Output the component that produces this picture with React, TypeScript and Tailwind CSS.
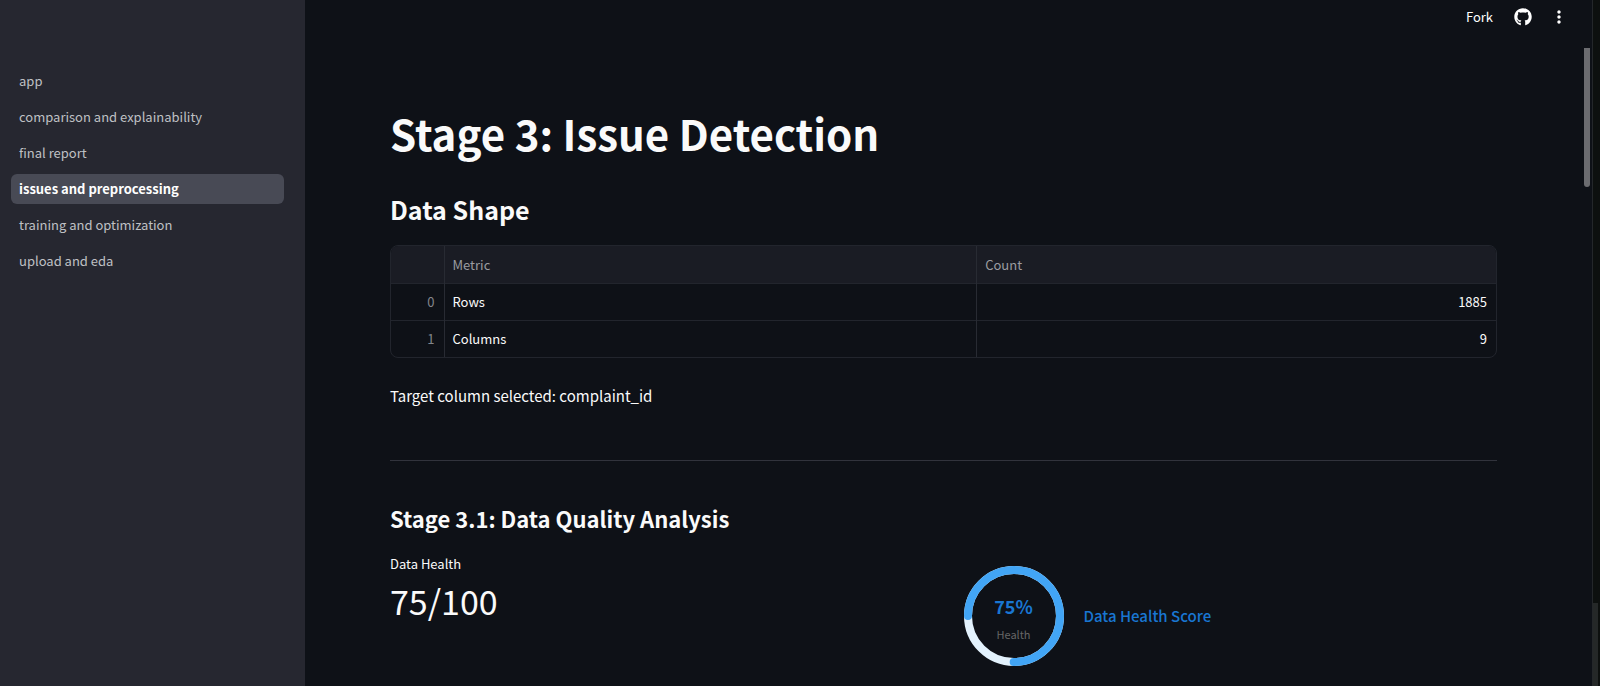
import { FaGithub } from 'react-icons/fa';
import { MdMoreVert } from 'react-icons/md';

const PAGES = [
  'app',
  'comparison and explainability',
  'final report',
  'issues and preprocessing',
  'training and optimization',
  'upload and eda',
];

const SHAPE_ROWS = [
  { metric: 'Rows', count: 1885 },
  { metric: 'Columns', count: 9 },
];

function Sidebar({ active }: { active: string }) {
  return (
    <aside className="w-[305px] shrink-0 bg-[#262730] pt-[66px] pr-[21px] pl-[11px]">
      <nav className="flex flex-col gap-[6px]">
        {PAGES.map((page) => (
          <a
            key={page}
            href="#"
            aria-current={page === active ? 'page' : undefined}
            className={
              page === active
                ? 'rounded-md bg-[#484a55] px-2 text-[13px] leading-[30px] font-bold text-white'
                : 'rounded-md px-2 text-[13px] leading-[30px] text-[#bfc0c4]'
            }
          >
            {page}
          </a>
        ))}
      </nav>
    </aside>
  );
}

function Toolbar() {
  return (
    <header className="flex h-[33px] items-center justify-end gap-[17px] pr-[15px] text-white">
      <button type="button" className="mr-1 text-[13px]">
        Fork
      </button>
      <button type="button" aria-label="View source on GitHub">
        <FaGithub className="size-[18px]" />
      </button>
      <button type="button" aria-label="Main menu">
        <MdMoreVert className="size-5" />
      </button>
    </header>
  );
}

function ShapeTable() {
  return (
    <div className="overflow-hidden rounded-lg border border-[#22252d]">
      <table className="w-full table-fixed border-collapse text-[13px]">
        <colgroup>
          <col className="w-[53px]" />
          <col />
          <col className="w-[47%]" />
        </colgroup>
        <thead>
          <tr className="h-[37px] bg-[#1a1c24] text-left text-[#9b9ca1]">
            <th className="border-r border-[#282b33]" />
            <th className="border-r border-[#282b33] px-2 font-normal">Metric</th>
            <th className="px-2 font-normal">Count</th>
          </tr>
        </thead>
        <tbody>
          {SHAPE_ROWS.map((row, i) => (
            <tr key={row.metric} className="h-[37px] border-t border-[#22252d] text-[#fafafa]">
              <td className="border-r border-[#282b33] pr-[9px] text-right text-[#83858b]">{i}</td>
              <td className="border-r border-[#282b33] px-2">{row.metric}</td>
              <td className="pr-[9px] text-right">{row.count}</td>
            </tr>
          ))}
        </tbody>
      </table>
    </div>
  );
}

function HealthRing({ score }: { score: number }) {
  const radius = 46;
  const length = 2 * Math.PI * radius;
  return (
    <div className="flex items-center gap-5 pt-[14px] pl-3">
      <div className="relative size-[100px]">
        <svg viewBox="0 0 100 100" className="size-full" fill="none" strokeWidth="8">
          <circle cx="50" cy="50" r={radius} stroke="#e3f2fd" />
          <circle
            cx="50"
            cy="50"
            r={radius}
            stroke="#42a5f5"
            strokeLinecap="round"
            strokeDasharray={`${(length * score) / 100} ${length}`}
            transform="rotate(180 50 50)"
          />
        </svg>
        <div className="absolute inset-0 flex flex-col items-center justify-center pt-1">
          <span className="text-[18px] leading-8 font-bold text-[#1976d2]">{score}%</span>
          <span className="text-[11px] leading-6 text-[#666]">Health</span>
        </div>
      </div>
      <span className="text-[15px] font-medium text-[#1976d2]">Data Health Score</span>
    </div>
  );
}

export default function App() {
  return (
    <div className="flex h-screen overflow-hidden bg-[#0e1117] font-['Noto_Sans_CJK_JP','Noto_Sans',sans-serif] text-[#fafafa]">
      <Sidebar active="issues and preprocessing" />
      <main className="min-w-0 flex-1">
        <Toolbar />
        <div className="pt-[73px] pr-[87px] pl-[85px]">
          <h1 className="text-[42px] leading-[54px] font-bold">Stage 3: Issue Detection</h1>
          <h2 className="mt-[29px] mb-4 text-[25px] leading-10 font-bold">Data Shape</h2>
          <ShapeTable />
          <p className="mt-6 text-[15px] leading-7">Target column selected: complaint_id</p>
          <hr className="mt-[50px] border-[#31333c]" />
          <h3 className="mt-[39px] text-[22px] leading-9 font-bold">Stage 3.1: Data Quality Analysis</h3>
          <div className="mt-4 grid grid-cols-2 gap-4">
            <div>
              <p className="text-[13px] leading-6">Data Health</p>
              <p className="text-[34px] leading-[50px]">75/100</p>
            </div>
            <HealthRing score={75} />
          </div>
        </div>
      </main>
      <div className="w-2 shrink-0 pt-12">
        <div className="h-[139px] w-[6px] rounded-b-sm bg-[#6b6c70]" />
      </div>
      <div className="flex w-2 shrink-0 flex-col justify-end border-l border-[#24272a] bg-[#0d100f]">
        <div className="h-[83px] w-[5px] bg-[#252828]" />
      </div>
    </div>
  );
}
